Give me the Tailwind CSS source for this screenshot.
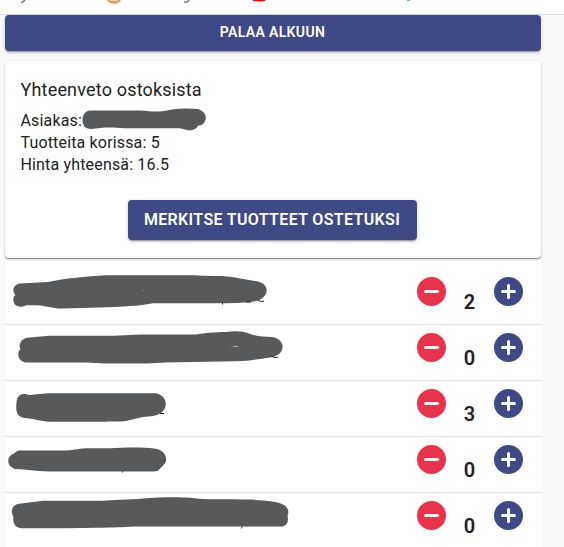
<!DOCTYPE html>
<html lang="fi">
<head>
<meta charset="utf-8">
<title>Ostokset</title>
<script src="https://cdn.jsdelivr.net/npm/@tailwindcss/browser@4"></script>
</head>
<body class="h-[547px] overflow-hidden bg-[#fafafa] font-[Roboto,sans-serif] text-[#212121]">
<svg width="0" height="0" class="absolute">
  <symbol id="minus" viewBox="0 0 29 29"><circle cx="14.5" cy="14.5" r="14.5" fill="#e8334a"/><path d="M8.6 14.5H20.6" stroke="#fff" stroke-width="3" stroke-linecap="round"/></symbol>
  <symbol id="plus" viewBox="0 0 29 29"><circle cx="14.5" cy="14.5" r="14.5" fill="#3f4985"/><path d="M8.6 14.5H20.4M14.5 8.6V20.4" stroke="#fff" stroke-width="3" stroke-linecap="round"/></symbol>
</svg>
<header class="h-[15px] border-b border-[#dadce0] bg-white">
  <svg class="block" width="564" height="14" viewBox="0 0 564 14" fill="none">
    <path d="M24.5 0Q24 2.5 21 2.3" stroke="#555" stroke-width="1.2"/>
    <path d="M189 0Q188 2.8 184 2" stroke="#555" stroke-width="1.2"/>
    <path d="M107 0C109 5 119 5 121 0Z" fill="#e09a62"/><path d="M110 0H118V1H110Z" fill="#e8d5c5"/>
    <path d="M252 0Q253 1.5 259 1.5T266 0Z" fill="#f00"/>
    <path d="M407 0H410V1H407Z" fill="#4cc5cf"/>
  </svg>
</header>
<main class="ml-[5px] w-[536px]">
  <button class="flex h-9 w-full items-center justify-center rounded-[4px] bg-[#3f4985] pr-px pb-px text-[14px] font-semibold tracking-[0.35px] text-white shadow-[0_2px_2px_-1px_rgba(0,0,0,.4),0_1px_4px_rgba(0,0,0,.16)]">PALAA ALKUUN</button>
  <section class="mt-[10px] flex h-[197px] flex-col rounded-[4px] bg-white pr-4 pl-[15.5px] pt-4 shadow-[0_1px_1px_rgba(0,0,0,.4),0_1px_3px_rgba(0,0,0,.16)]">
    <h1 class="text-[18px] leading-[26px] tracking-[0.18px]">Yhteenveto ostoksista</h1>
    <div class="mt-[7px] text-[16px] leading-[22px] tracking-[0.16px]">
      <div class="flex h-[22px]">Asiakas:<svg class="-mt-[4px] h-[25px] w-[126px] shrink-0" viewBox="82 106 126 25"><path fill="#58595b" d="M90 110.5H142C151 112 161 112 169 110C182 108 190 108.600 198 109C204 111 207 116 205.500 120C204 124 201 126 198 125.500C197 129 192 131 187 130L180 128.200H124C112 127 103 127 91 129C85 129 82.500 125 82.500 120C82.500 115 85 111 90 110.500Z"/></svg></div>
      <div>Tuotteita korissa: 5</div>
      <div>Hinta yhteensä: 16.5</div>
    </div>
    <button class="mt-[24px] mr-[1.5px] flex h-10 w-[289px] shrink-0 items-center justify-center self-center rounded-[4px] bg-[#3f4985] text-[16px] font-semibold tracking-[0.35px] text-white shadow-[0_2px_2px_-1px_rgba(0,0,0,.4),0_1px_4px_rgba(0,0,0,.16)]">MERKITSE TUOTTEET OSTETUKSI</button>
  </section>
  <ul class="mt-[3px] bg-white pt-2">
    <li class="flex h-14 border-b border-[#e0e0e0]">
      <svg class="h-[55px] w-[300px]" viewBox="5 269 300 55"><path fill="#58595b" d="M20 283.500L48 282C65 278 86 276.500 106 275.200H195C205 276.500 218 275 232 277L258 281.500C265 283 267 288 266.600 291C266 296 262 300 254 301.500C233 304 216 303 196 303.300H153C134 307 113 307 91 307.700L63 308.500C53 309 47 305.500 37 305.200H26C22 308 14 307 13.500 301C13 298 13.500 296 15.500 295C11 290 14 284.500 20 283.500Z"/><path d="M222.500 303V304.500M258 300Q260 302.500 264 301M246 302H251" fill="none" stroke="#222" stroke-width="1"/><path d="M142 290.500H144" stroke="#777"/></svg>
      <svg class="mt-2 ml-[112px] size-[29px]"><use href="#minus"/></svg><span class="mt-[21px] w-12 pr-px text-center text-[20px] leading-6 font-semibold">2</span><svg class="mt-2 size-[29px]"><use href="#plus"/></svg>
    </li>
    <li class="flex h-14 border-b border-[#e0e0e0]">
      <svg class="h-[55px] w-[300px]" viewBox="5 325 300 55"><path fill="#58595b" d="M27 337.800L49 335.800H115C139 333.500 169 334.800 196 334.500C205 333 214 332 226 332C235 330.500 243 331 249 333.500C256 336.500 264 336.500 272 337C279 338 283 343 282.600 347C282 354 276 356.500 270 357.500C258 359 247 361.500 234 361.200L208 361.800L166 362.400C144 364 110 364 86 362.400H26C21 362.300 18 358 18.300 354C18.300 351.500 19.500 350 20.500 349.500C18 345 21 339 27 337.800Z"/><path d="M271 356Q274 358.500 278 357.200" fill="none" stroke="#222"/><path d="M230 346.500H231" stroke="#858a8f"/><path d="M233 346.500H238" stroke="#a5abb0"/></svg>
      <svg class="mt-2 ml-[112px] size-[29px]"><use href="#minus"/></svg><span class="mt-[21px] w-12 pr-px text-center text-[20px] leading-6 font-semibold">0</span><svg class="mt-2 size-[29px]"><use href="#plus"/></svg>
    </li>
    <li class="flex h-14 border-b border-[#e0e0e0]">
      <svg class="h-[55px] w-[300px]" viewBox="5 381 300 55"><path fill="#58595b" d="M19 396C21 393.800 25 393.500 29 395L48 393.200H155C161 393.500 165.500 398 165.700 403C166 409 162 413.500 157 415C152 417 146 416 141 417.500L126 421C119 422 112 421.400 105 421.700H50C40 421.500 34 418.500 24 418C18 416.500 16.300 413 16.300 408C16.300 403 16.500 398 19 396Z"/><path d="M160 413.500H164" stroke="#222"/></svg>
      <svg class="mt-2 ml-[112px] size-[29px]"><use href="#minus"/></svg><span class="mt-[21px] w-12 pr-px text-center text-[20px] leading-6 font-semibold">3</span><svg class="mt-2 size-[29px]"><use href="#plus"/></svg>
    </li>
    <li class="flex h-14 border-b border-[#e0e0e0]">
      <svg class="h-[55px] w-[300px]" viewBox="5 437 300 55"><path fill="#58595b" d="M19 450.500H67C75 450 79 448.300 89 448.300H110C123 447.300 143 446.800 154 448.500C163 449.500 166.500 455 166.200 460C165.500 464 162 466.500 160 468.500C158.500 471 156 471.600 153 471.500H52C40 471.500 27 469.500 15 469C10 467 8.300 464 8.300 461C8.300 457 11 454.500 14 453.500C15 452 17 451 19 450.500Z"/><path d="M122.500 471V472.500" stroke="#345"/></svg>
      <svg class="mt-2 ml-[112px] size-[29px]"><use href="#minus"/></svg><span class="mt-[21px] w-12 pr-px text-center text-[20px] leading-6 font-semibold">0</span><svg class="mt-2 size-[29px]"><use href="#plus"/></svg>
    </li>
    <li class="flex h-14">
      <svg class="h-[55px] w-[300px]" viewBox="5 493 300 55"><path fill="#58595b" d="M19 503.800L43 500.800H103C119 499.300 134 499.800 149 498C161 497.200 178 496.800 190 497.800C207 500 225 499.200 252 499.500C267 501 277 501 284 505C288 507.500 289.500 512 287.500 516C289 521 287 526 282 526.500H134C121 527.500 113 527.300 98 527.800L66 528.300H22C15 528 12.500 523 13.500 517C10 511 12 505 19 503.800Z"/><path d="M242.500 526L241 528.500" stroke="#345"/></svg>
      <svg class="mt-2 ml-[112px] size-[29px]"><use href="#minus"/></svg><span class="mt-[21px] w-12 pr-px text-center text-[20px] leading-6 font-semibold">0</span><svg class="mt-2 size-[29px]"><use href="#plus"/></svg>
    </li>
  </ul>
</main>
</body>
</html>
